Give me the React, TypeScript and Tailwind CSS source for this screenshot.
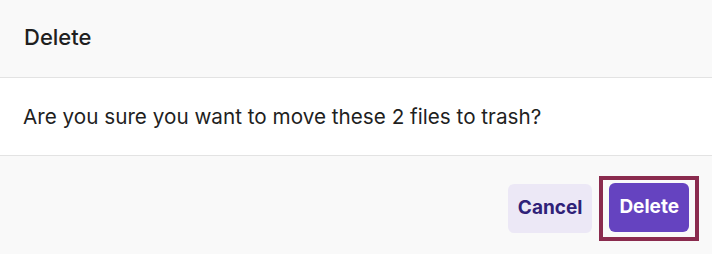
import React from 'react'

export default function App() {
  return (
    <div className="w-[712px] h-[254px] bg-[#f9f9f9] flex flex-col font-['Inter',sans-serif] text-[#1f1f1f]">
      {/* Header */}
      <div className="h-[78px] shrink-0 flex items-center px-6 pb-[3px] border-b border-[#e3e3e3] bg-[#f9f9f9]">
        <h2 className="text-[22px] font-medium">Delete</h2>
      </div>

      {/* Body */}
      <div className="h-[78px] shrink-0 flex items-center px-[23px] border-b border-[#e3e3e3] bg-white">
        <p className="text-[20.7px]">Are you sure you want to move these 2 files to trash?</p>
      </div>

      {/* Footer */}
      <div className="flex-1 flex justify-end items-center gap-[7px] pt-[20px] pr-[13px] pb-[13px] bg-[#f9f9f9]">
        <button className="h-[49px] px-[10px] rounded-[6px] bg-[#ece8f6] text-[#2f2178] text-[19px] font-bold">
          Cancel
        </button>
        <div className="border-4 border-[#8a2b4e] px-[6px] pt-[3px] pb-[5px]">
          <button className="h-[49px] px-[10px] rounded-[6px] bg-[#6543c0] text-white text-[19px] font-bold">
            Delete
          </button>
        </div>
      </div>
    </div>
  )
}
